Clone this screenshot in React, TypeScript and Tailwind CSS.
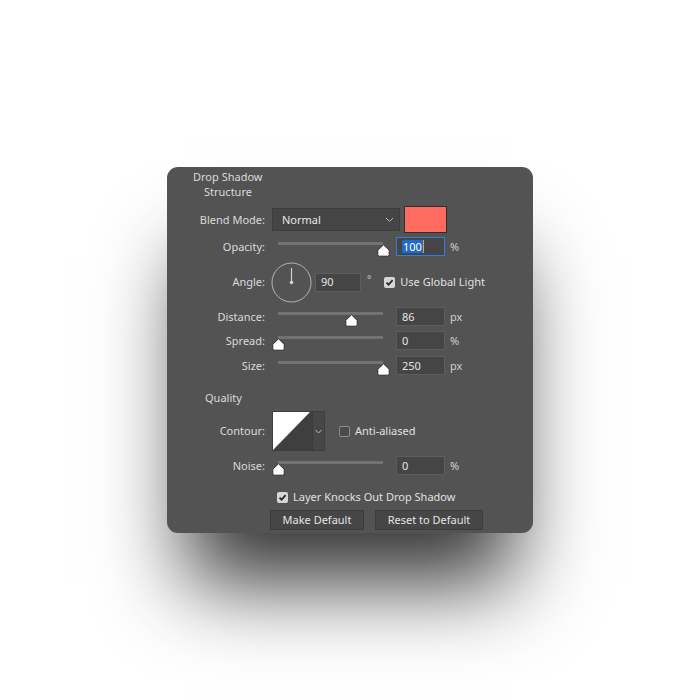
import React from "react";

const Thumb = () => (
  <svg width="13" height="13" viewBox="0 0 13 13" className="block">
    <path d="M6.5 0.8 L12.2 6.3 V10.8 Q12.2 12.2 10.8 12.2 H2.2 Q0.8 12.2 0.8 10.8 V6.3 Z" fill="#ffffff" stroke="#2e2e2e" strokeWidth="1" />
  </svg>
);

const Slider = ({ pos }: { pos: number }) => (
  <div className="relative w-[117px] h-[19px]">
    <div className="absolute left-[6px] right-[6px] top-[5px] h-[3px] bg-[#727272]" />
    <div className="absolute top-[7px]" style={{ left: `${pos}px` }}>
      <Thumb />
    </div>
  </div>
);

const Input = ({ v, focus }: { v: string; focus?: boolean }) => (
  <div
    className={
      "w-[49px] h-[19px] flex items-center pl-[5px] bg-[#454545] border " +
      (focus ? "border-[#2f7ee0]" : "border-[#5c5c5c]")
    }
  >
    {focus ? (
      <>
        <span className="bg-[#2468c8] text-white leading-[13px] px-[1px]">{v}</span>
        <span className="w-[1px] h-[13px] bg-[#e0a050]" />
      </>
    ) : (
      <span className="text-[#e4e4e4]">{v}</span>
    )}
  </div>
);

const Check = ({ on }: { on: boolean }) =>
  on ? (
    <div className="w-[11px] h-[11px] rounded-[2px] bg-[#d6d6d6] flex items-center justify-center">
      <svg width="9" height="9" viewBox="0 0 9 9">
        <path d="M1.5 4.6 L3.6 6.7 L7.6 2.2" fill="none" stroke="#2a2a2a" strokeWidth="1.8" />
      </svg>
    </div>
  ) : (
    <div className="w-[11px] h-[11px] rounded-[2px] border border-[#8c8c8c] bg-[#4a4a4a]" />
  );

const Chevron = () => (
  <svg width="9" height="6" viewBox="0 0 9 6">
    <path d="M1 1 L4.5 4.5 L8 1" fill="none" stroke="#bdbdbd" strokeWidth="1" />
  </svg>
);

const Label = ({ children }: { children: React.ReactNode }) => (
  <div className="w-[98px] text-right pr-[0px] text-[#dadada]">{children}</div>
);

const SliderRow = ({ label, pos, v, unit, focus, h }: { label: string; pos: number; v: string; unit: string; focus?: boolean; h: string }) => (
  <div className={"flex items-center " + h}>
    <Label>{label}</Label>
    <div className="ml-[7px]">
      <Slider pos={pos} />
    </div>
    <div className="ml-[7px]">
      <Input v={v} focus={focus} />
    </div>
    <div className="ml-[5px] text-[#d0d0d0]">{unit}</div>
  </div>
);

export default function App() {
  return (
    <div className="w-[700px] h-[700px] bg-white flex items-center justify-center" style={{ fontFamily: '"Segoe UI", "Noto Sans", sans-serif' }}>
      <div className="w-[366px] h-[366px] bg-[#535353] rounded-[11px] shadow-[0_70px_80px_-20px_rgba(0,0,0,0.8)] text-[11px] leading-[14px] text-[#dadada] flex flex-col pt-[3px]">
        <div className="pl-[26px] h-[15px]">Drop Shadow</div>
        <div className="pl-[37px] h-[15px] mt-[0px]">Structure</div>

        <div className="flex items-center h-[27px] mt-[6px]">
          <Label>Blend Mode:</Label>
          <div className="ml-[7px] w-[128px] h-[23px] bg-[#454545] border border-[#3d3d3d] flex items-center pl-[9px] pr-[5px] justify-between text-[#e8e8e8]">
            <span>Normal</span>
            <Chevron />
          </div>
          <div className="ml-[4px] w-[43px] h-[27px] bg-[#ff6c5f] border border-[#2e2e2e]" />
        </div>

        <SliderRow label="Opacity:" pos={105} v="100" unit="%" focus h="h-[19px] mt-[4px]" />

        <div className="flex items-center h-[40px] mt-[6px]">
          <Label>Angle:</Label>
          <svg width="41" height="41" viewBox="0 0 41 41" className="ml-[6px]">
            <circle cx="20.5" cy="20.5" r="19.5" fill="none" stroke="#b5b5b5" strokeWidth="1" />
            <line x1="20.5" y1="20.5" x2="20.5" y2="6" stroke="#d0d0d0" strokeWidth="1.2" />
            <circle cx="20.5" cy="20.5" r="1.8" fill="#d0d0d0" />
          </svg>
          <div className="ml-[3px] w-[46px] h-[19px] flex items-center pl-[5px] bg-[#454545] border border-[#5c5c5c] text-[#e4e4e4]">90</div>
          <div className="ml-[6px] text-[#cfcfcf] self-start mt-[10px] text-[10px]">°</div>
          <div className="ml-[13px]">
            <Check on />
          </div>
          <div className="ml-[5px] text-[#e0e0e0]">Use Global Light</div>
        </div>

        <SliderRow label="Distance:" pos={73} v="86" unit="px" h="h-[19px] mt-[5px]" />
        <SliderRow label="Spread:" pos={0} v="0" unit="%" h="h-[19px] mt-[5px]" />
        <SliderRow label="Size:" pos={105} v="250" unit="px" h="h-[19px] mt-[6px]" />

        <div className="pl-[38px] h-[15px] mt-[16px]">Quality</div>

        <div className="flex items-center h-[40px] mt-[5px]">
          <Label>Contour:</Label>
          <div className="ml-[7px] flex h-[40px] border border-[#3e3e3e]">
            <svg width="39" height="38" viewBox="0 0 39 38" className="block">
              <rect width="39" height="38" fill="#3f3f3f" />
              <path d="M0 0 H37 L0 38 Z" fill="#ffffff" />
            </svg>
            <div className="w-[12px] h-[38px] bg-[#474747] border-l border-[#3a3a3a] flex items-center justify-center">
              <svg width="7" height="5" viewBox="0 0 7 5">
                <path d="M0.5 1 L3.5 4 L6.5 1" fill="none" stroke="#bdbdbd" strokeWidth="1" />
              </svg>
            </div>
          </div>
          <div className="ml-[14px]">
            <Check on={false} />
          </div>
          <div className="ml-[5px] text-[#e0e0e0]">Anti-aliased</div>
        </div>

        <SliderRow label="Noise:" pos={0} v="0" unit="%" h="h-[19px] mt-[5px]" />

        <div className="flex items-center h-[14px] mt-[15px] pl-[110px]">
          <Check on />
          <div className="ml-[5px] text-[#e0e0e0]">Layer Knocks Out Drop Shadow</div>
        </div>

        <div className="flex items-center mt-[6px] pl-[103px] gap-[11px]">
          <div className="w-[94px] h-[20px] bg-[#464646] border border-[#3c3c3c] flex items-center justify-center text-[#e4e4e4]">Make Default</div>
          <div className="w-[108px] h-[20px] bg-[#464646] border border-[#3c3c3c] flex items-center justify-center text-[#e4e4e4]">Reset to Default</div>
        </div>
      </div>
    </div>
  );
}
